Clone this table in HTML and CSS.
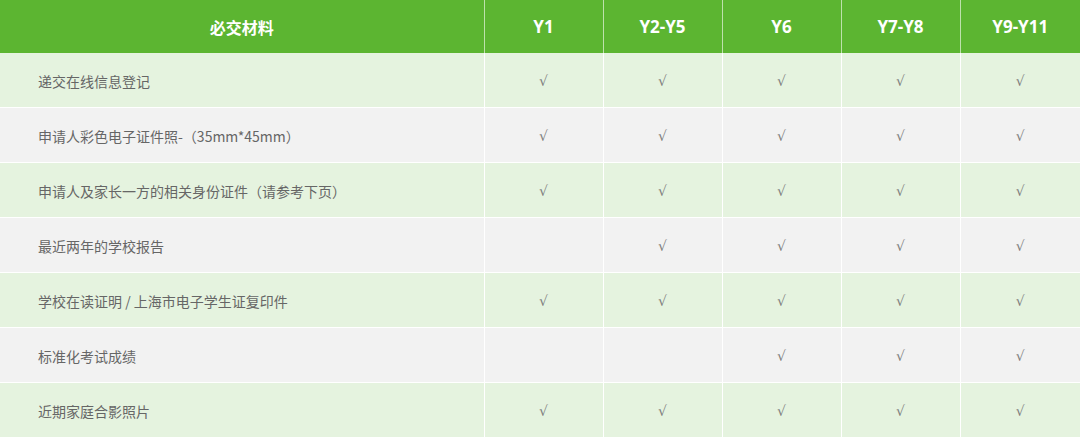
FILE: index.html
```html
<!DOCTYPE html>
<html lang="zh-CN">
<head>
<meta charset="utf-8">
<title>必交材料</title>
<link rel="stylesheet" href="styles.css">
</head>
<body>
<table class="materials">
  <colgroup>
    <col class="col-name">
    <col class="col-year">
    <col class="col-year">
    <col class="col-year">
    <col class="col-year">
    <col class="col-last">
  </colgroup>
  <thead>
    <tr>
      <th class="title">必交材料</th>
      <th>Y1</th>
      <th>Y2-Y5</th>
      <th>Y6</th>
      <th>Y7-Y8</th>
      <th>Y9-Y11</th>
    </tr>
  </thead>
  <tbody>
    <tr class="green">
      <td class="name">递交在线信息登记</td>
      <td>√</td><td>√</td><td>√</td><td>√</td><td>√</td>
    </tr>
    <tr class="gray">
      <td class="name">申请人彩色电子证件照-（35mm*45mm）</td>
      <td>√</td><td>√</td><td>√</td><td>√</td><td>√</td>
    </tr>
    <tr class="green">
      <td class="name">申请人及家长一方的相关身份证件（请参考下页）</td>
      <td>√</td><td>√</td><td>√</td><td>√</td><td>√</td>
    </tr>
    <tr class="gray">
      <td class="name">最近两年的学校报告</td>
      <td></td><td>√</td><td>√</td><td>√</td><td>√</td>
    </tr>
    <tr class="green">
      <td class="name">学校在读证明 / 上海市电子学生证复印件</td>
      <td>√</td><td>√</td><td>√</td><td>√</td><td>√</td>
    </tr>
    <tr class="gray">
      <td class="name">标准化考试成绩</td>
      <td></td><td></td><td>√</td><td>√</td><td>√</td>
    </tr>
    <tr class="green">
      <td class="name">近期家庭合影照片</td>
      <td>√</td><td>√</td><td>√</td><td>√</td><td>√</td>
    </tr>
  </tbody>
</table>
</body>
</html>
```

FILE: styles.css
```css
html, body {
  margin: 0;
  padding: 0;
  background: #ffffff;
}

body {
  font-family: "Noto Sans CJK SC", "Noto Sans", "Liberation Sans", sans-serif;
}

.materials {
  width: 1080px;
  border-collapse: collapse;
  table-layout: fixed;
}

.col-name { width: 484px; }
.col-year { width: 119px; }
.col-last { width: 120px; }

.materials th,
.materials td {
  border-right: 1px solid #ffffff;
  padding: 0;
  text-align: center;
}

.materials th:last-child,
.materials td:last-child {
  border-right: none;
}

.materials th {
  height: 53px;
  background: #5cb531;
  color: #ffffff;
  font-family: "Open Sans", "Noto Sans CJK SC", sans-serif;
  font-weight: 700;
  font-size: 17px;
  border-right-color: rgba(255, 255, 255, 0.6);
}

.materials th.title {
  font-family: "Noto Sans CJK SC", sans-serif;
  font-size: 16px;
}

.materials td {
  height: 52px;
  padding-top: 2px;
  border-bottom: 1px solid #ffffff;
  color: #808080;
  font-size: 14px;
  font-family: "DejaVu Sans", "Noto Sans CJK SC", sans-serif;
}

.materials td.name {
  text-align: left;
  padding-left: 38px;
  color: #666666;
  font-family: "Noto Sans CJK SC", sans-serif;
  font-size: 14px;
}

.green td { background: #e5f3df; }
.gray td { background: #f2f2f2; }
```
